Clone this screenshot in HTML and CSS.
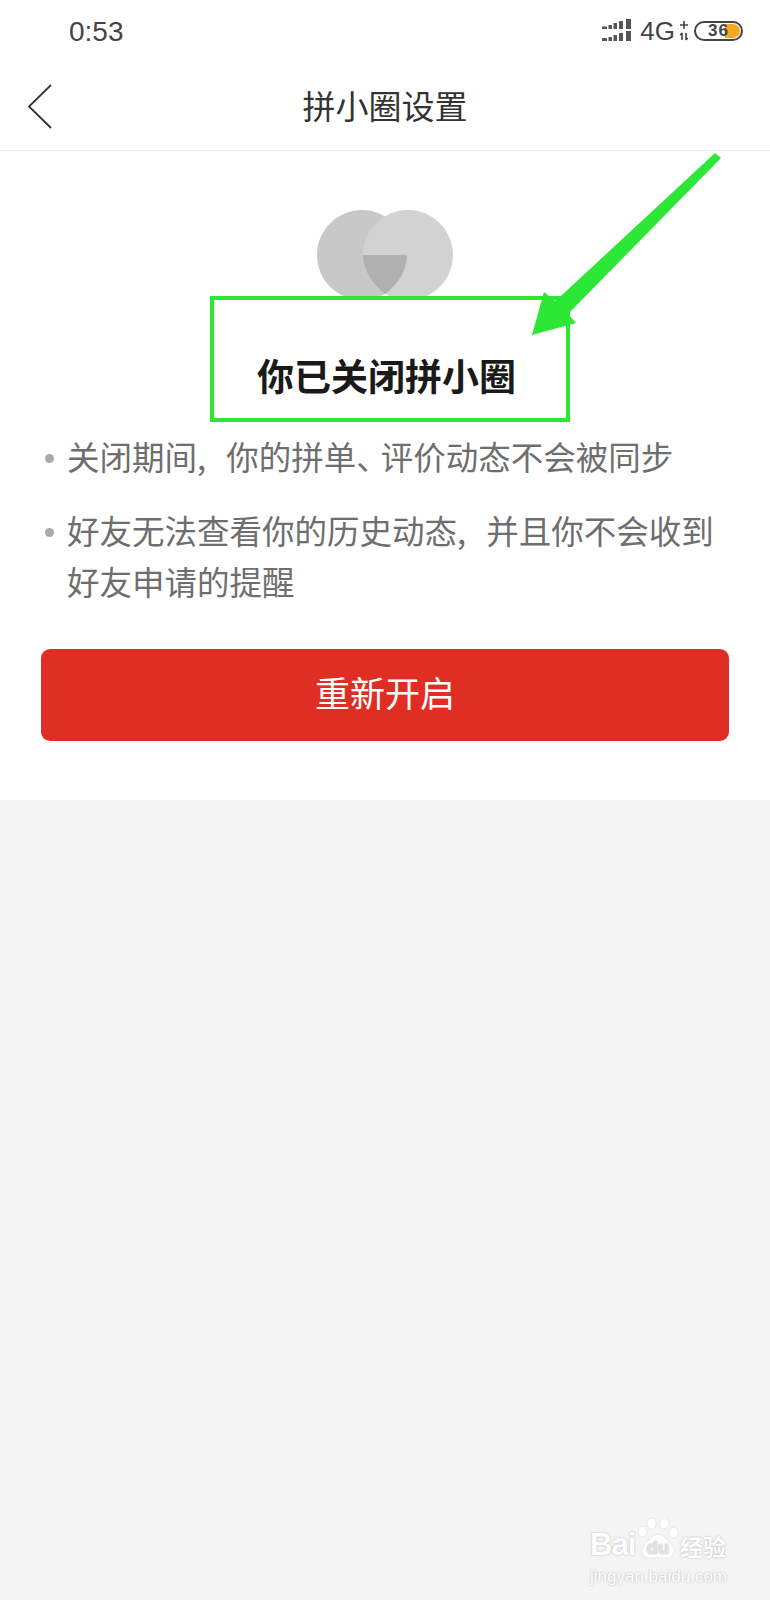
FILE: index.html
```html
<!DOCTYPE html>
<html lang="zh-CN">
<head>
    <meta charset="UTF-8">
    <meta name="viewport" content="width=device-width, initial-scale=1.0">
    <title>拼小圈设置</title>
    <link rel="stylesheet" href="styles.css">
</head>
<body>
<div id="app">
    <!-- Status bar -->
    <div class="status-bar">
        <span class="time">0:53</span>
        <div class="status-icons">
            <svg class="signal" width="31" height="24" viewBox="0 0 31 24">
                <path d="M0 7.500h5v2.500H0zM6.500 6h3.500v4H6.500zM11.500 4h3.500v6h-3.500zM17 2h4v8h-4zM24 0h5v10h-5zM0 19h5v3H0zM6.500 18h3.500v4H6.500zM11.500 16h3.500v6h-3.500zM17 14h4v8h-4zM24 12h5v10h-5z" fill="#555"/>
            </svg>
            <span class="net">4G</span>
            <svg class="updown" width="10" height="20" viewBox="0 0 10 20">
                <path d="M5 0v8M1 4h8M3 12v7M1.200 14l1.800-2M7 12v7M7 19l1.800-2" fill="none" stroke="#444" stroke-width="1.600"/>
            </svg>
            <div class="battery">
                <span class="battery-fill"></span>
                <span class="battery-num">36</span>
            </div>
        </div>
    </div>

    <!-- Nav -->
    <div class="nav">
        <svg class="back" width="26" height="46" viewBox="0 0 26 46">
            <path d="M24 2L2 23.500L24 45" fill="none" stroke="#333" stroke-width="1.800"/>
        </svg>
        <span class="nav-title">拼小圈设置</span>
    </div>

    <div class="panel">
        <svg class="circles" width="136" height="90" viewBox="0 0 136 90">
            <circle cx="45" cy="45" r="45" fill="#c8c8c8"/>
            <circle cx="91" cy="45" r="45" fill="#d2d2d2"/>
            <path d="M46 45H90C90 61 80 75 68 84C56 75 46 61 46 45Z" fill="#b0b0b0"/>
        </svg>

        <h1 class="heading">你已关闭拼小圈</h1>

        <ul class="notes">
            <li class="note"><span class="dot"></span><span>关闭期间, 你的拼单<span class="pause">、</span>评价动态不会被同步</span></li>
            <li class="note"><span class="dot"></span><span>好友无法查看你的历史动态, 并且你不会收到好友申请的提醒</span></li>
        </ul>

        <button class="btn">重新开启</button>
    </div>

    <!-- Annotation drawn on top of the screenshot -->
    <div class="mark-box"></div>
    <svg class="mark-arrow" width="770" height="400" viewBox="0 0 770 400">
        <polygon points="532,335 544,292 555,301 562,295 715,153 721,158 568,314 576,323" fill="#2ce735"/>
    </svg>

    <!-- Watermark -->
    <div class="watermark">
        <div class="wm-row">
            <span class="wm-bai">Bai</span>
            <svg class="wm-paw" width="42" height="42" viewBox="0 0 46 46">
                <g fill="#fff" stroke="#e6e6e6">
                    <ellipse cx="6" cy="15" rx="5" ry="6"/>
                    <ellipse cx="16" cy="6" rx="5" ry="6"/>
                    <ellipse cx="30" cy="6" rx="5" ry="6"/>
                    <ellipse cx="40" cy="16" rx="5" ry="6"/>
                    <path d="M23 18C30 18 32 24 37 28C44 34 40 45 30 44C26 43 20 43 16 44C6 45 2 35 9 28C14 24 16 18 23 18Z"/>
                </g>
                <text class="wm-du" x="23" y="39" text-anchor="middle">du</text>
            </svg>
            <span class="wm-cn">经验</span>
        </div>
        <div class="wm-url">jingyan.baidu.com</div>
    </div>
</div>
</body>
</html>
```

FILE: styles.css
```css
:root {
    --bg: #f4f4f4;
    --text: #333;
    --red: #e02e24;
    --mark: #2ce735;
}

* {
    margin: 0;
    padding: 0;
    box-sizing: border-box;
}

body {
    background: var(--bg);
    color: var(--text);
    font-family: "Noto Sans CJK SC", "Noto Sans", sans-serif;
}

#app {
    position: relative;
    width: 770px;
    height: 1600px;
    overflow: hidden;
}

/* Status bar */
.status-bar {
    display: flex;
    align-items: center;
    justify-content: space-between;
    height: 62px;
    padding: 0 27px 0 69px;
    background: #fff;
}

.time {
    padding-top: 2px;
    font-family: "Liberation Sans", sans-serif;
    font-size: 28px;
    color: #444;
}

.status-icons {
    display: flex;
    align-items: center;
}

.signal {
    margin-right: 7px;
}

.net {
    font-family: "Liberation Sans", sans-serif;
    font-size: 26px;
    color: #444;
}

.updown {
    margin: 0 5px 0 4px;
}

.battery {
    position: relative;
    width: 49px;
    height: 20px;
    border: 2px solid #444;
    border-radius: 10px;
    overflow: hidden;
}

.battery-fill {
    position: absolute;
    top: 1px;
    right: 1px;
    bottom: 1px;
    width: 15px;
    border-radius: 0 8px 8px 0;
    background: #f5a623;
}

.battery-num {
    position: absolute;
    left: 12px;
    top: -4px;
    font-family: "Liberation Sans", sans-serif;
    font-size: 17px;
    font-weight: 700;
    letter-spacing: 1px;
    line-height: 24px;
    color: #444;
}

/* Nav */
.nav {
    position: relative;
    display: flex;
    align-items: center;
    justify-content: center;
    height: 89px;
    background: #fff;
    border-bottom: 1px solid #e6e6e6;
}

.back {
    position: absolute;
    left: 27px;
    top: 21px;
}

.nav-title {
    margin-top: -2px;
    font-size: 33px;
    line-height: 88px;
    color: #333;
}

/* White panel */
.panel {
    display: flex;
    flex-direction: column;
    align-items: center;
    height: 649px;
    padding-top: 59px;
    background: #fff;
}

.circles {
    display: block;
}

.heading {
    margin: 50px 0 0 3px;
    font-size: 37px;
    font-weight: 700;
    line-height: 50px;
    color: #1a1a1a;
}

.notes {
    align-self: stretch;
    margin-top: 30px;
    padding: 0 41px 0 45px;
    list-style: none;
}

.note {
    display: flex;
    gap: 13px;
    margin-bottom: 23px;
    font-size: 32.500px;
    line-height: 51px;
    word-spacing: 13px;
    color: #6e6e6e;
}

.note:last-child {
    margin-bottom: 0;
}

.pause {
    letter-spacing: -8px;
}

.dot {
    flex: none;
    width: 9px;
    height: 9px;
    margin-top: 24px;
    border-radius: 50%;
    background: #aaa;
}

.btn {
    width: 688px;
    height: 92px;
    margin-top: 43px;
    padding-bottom: 8px;
    border: none;
    border-radius: 9px;
    background: var(--red);
    color: #fff;
    font-family: inherit;
    font-size: 35px;
}

/* Annotation */
.mark-box {
    position: absolute;
    left: 210px;
    top: 296px;
    width: 360px;
    height: 126px;
    border: 4px solid var(--mark);
}

.mark-arrow {
    position: absolute;
    left: 0;
    top: 0;
}

/* Watermark */
.watermark {
    position: absolute;
    left: 590px;
    top: 1518px;
    width: 140px;
    color: #fff;
    text-shadow: 0 0 2px #aaa;
}

.wm-row {
    display: flex;
    align-items: flex-end;
    height: 42px;
    white-space: nowrap;
}

.wm-bai {
    flex: none;
    width: 47px;
    font-family: "Liberation Sans", sans-serif;
    font-size: 31px;
    font-weight: 700;
    letter-spacing: -1px;
    line-height: 30px;
}

.wm-paw {
    flex: none;
}

.wm-du {
    font-family: "Liberation Sans", sans-serif;
    font-size: 20px;
    font-weight: 700;
    fill: #e4e4e4;
}

.wm-cn {
    flex: none;
    margin-left: 1px;
    font-size: 23px;
    font-weight: 700;
    line-height: 28px;
}

.wm-url {
    margin-top: 7px;
    font-family: "Liberation Sans", sans-serif;
    font-size: 17px;
    line-height: 20px;
    white-space: nowrap;
}
```
